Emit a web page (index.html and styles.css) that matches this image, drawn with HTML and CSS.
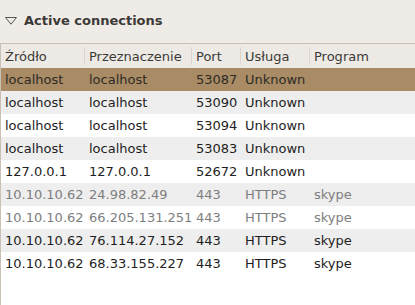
FILE: index.html
```html
<!DOCTYPE html>
<html lang="pl">
<head>
    <meta charset="UTF-8">
    <title>Active connections</title>
    <link rel="stylesheet" href="styles.css">
</head>
<body>
    <!-- expander -->
    <div class="expander">
        <svg class="arrow" width="12" height="8" viewBox="0 0 12 8">
            <path d="M0.5 0.5 L11.5 0.5 L6 7.2 Z" fill="none" stroke="#5a5753" stroke-width="1"/>
        </svg>
        <span class="title">Active connections</span>
    </div>

    <!-- lista połączeń -->
    <div class="tree">
        <div class="row head">
            <div class="cell">Źródło</div>
            <div class="cell">Przeznaczenie</div>
            <div class="cell">Port</div>
            <div class="cell">Usługa</div>
            <div class="cell">Program</div>
        </div>
        <div class="row selected">
            <div class="cell">localhost</div><div class="cell">localhost</div><div class="cell">53087</div><div class="cell">Unknown</div><div class="cell"></div>
        </div>
        <div class="row odd">
            <div class="cell">localhost</div><div class="cell">localhost</div><div class="cell">53090</div><div class="cell">Unknown</div><div class="cell"></div>
        </div>
        <div class="row">
            <div class="cell">localhost</div><div class="cell">localhost</div><div class="cell">53094</div><div class="cell">Unknown</div><div class="cell"></div>
        </div>
        <div class="row odd">
            <div class="cell">localhost</div><div class="cell">localhost</div><div class="cell">53083</div><div class="cell">Unknown</div><div class="cell"></div>
        </div>
        <div class="row">
            <div class="cell">127.0.0.1</div><div class="cell">127.0.0.1</div><div class="cell">52672</div><div class="cell">Unknown</div><div class="cell"></div>
        </div>
        <div class="row odd dim">
            <div class="cell">10.10.10.62</div><div class="cell">24.98.82.49</div><div class="cell">443</div><div class="cell">HTTPS</div><div class="cell">skype</div>
        </div>
        <div class="row dim">
            <div class="cell">10.10.10.62</div><div class="cell">66.205.131.251</div><div class="cell">443</div><div class="cell">HTTPS</div><div class="cell">skype</div>
        </div>
        <div class="row odd">
            <div class="cell">10.10.10.62</div><div class="cell">76.114.27.152</div><div class="cell">443</div><div class="cell">HTTPS</div><div class="cell">skype</div>
        </div>
        <div class="row">
            <div class="cell">10.10.10.62</div><div class="cell">68.33.155.227</div><div class="cell">443</div><div class="cell">HTTPS</div><div class="cell">skype</div>
        </div>
    </div>
</body>
</html>
```

FILE: styles.css
```css
/* base */
body {
    margin: 0;
    height: 305px;
    overflow: hidden;
    display: flex;
    flex-direction: column;
    font-family: "DejaVu Sans", sans-serif;
    font-size: 13px;
    background-color: #efebe7;
    color: #1e1e1e;
}

/* expander */
.expander {
    display: flex;
    align-items: center;
    height: 41px;
    padding-left: 5px;
    flex-shrink: 0;
}

.expander .arrow {
    margin-right: 7px;
    margin-top: 1px;
}

.expander .title {
    font-weight: bold;
    color: #3c3a37;
}

/* tree */
.tree {
    flex: 1;
    margin-top: 2px;
    background-color: #fff;
    border-top: 1px solid #c9c1b4;
    border-left: 1px solid #c9c1b4;
}

.row {
    display: grid;
    grid-template-columns: 84px 107px 49px 69px 1fr;
    height: 23px;
    align-items: center;
    white-space: nowrap;
}

.cell {
    padding-left: 4px;
    overflow: hidden;
}

.row.head {
    background-color: #edeae5;
    color: #3c3a37;
    height: 24px;
    align-items: stretch;
}

.row.head .cell {
    display: flex;
    align-items: center;
    border-right: 1px solid #dcd6cc;
    margin: 3px 0;
}

.row.head .cell:last-child {
    border-right: none;
}

.row.odd {
    background-color: #eeeeee;
}

.row.selected {
    background-color: #a98c66;
    color: #2e2a24;
}

.row.dim {
    color: #7e7e7e;
}
```
